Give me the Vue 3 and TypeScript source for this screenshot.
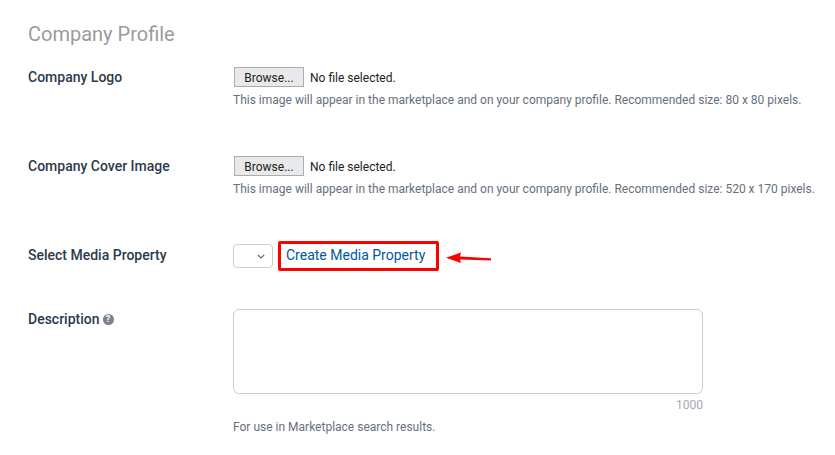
<script setup lang="ts">
interface FileRow { label: string; hint: string }
const fileRows: FileRow[] = [
  { label: 'Company Logo', hint: 'This image will appear in the marketplace and on your company profile. Recommended size: 80 x 80 pixels.' },
  { label: 'Company Cover Image', hint: 'This image will appear in the marketplace and on your company profile. Recommended size: 520 x 170 pixels.' },
]
</script>

<template>
  <div class="page">
    <h2 class="title">Company Profile</h2>

    <div v-for="row in fileRows" :key="row.label" class="row file-row">
      <div class="label">{{ row.label }}</div>
      <div class="control">
        <div class="file-line">
          <button class="browse" type="button">Browse...</button>
          <span class="file-name">No file selected.</span>
        </div>
        <div class="hint">{{ row.hint }}</div>
      </div>
    </div>

    <div class="row media-row">
      <div class="label">Select Media Property</div>
      <div class="media-control">
        <div class="select">
          <svg width="8" height="5" viewBox="0 0 8 5" class="chevron">
            <path d="M0.8 0.8 L4 4 L7.2 0.8" fill="none" stroke="#666" stroke-width="1.2" />
          </svg>
        </div>
        <a class="create" href="#">Create Media Property</a>
        <svg class="arrow" width="48" height="14" viewBox="0 0 48 14">
          <path d="M0 5.7 L15 0.5 L14 4.6 L45 6.2 L45 8.4 L14 7.6 L15 11 Z" fill="#f00" />
        </svg>
      </div>
    </div>

    <div class="row desc-row">
      <div class="label desc-label">
        Description
        <span class="help">?</span>
      </div>
      <div class="desc-control">
        <textarea class="area"></textarea>
        <div class="count">1000</div>
        <div class="hint desc-hint">For use in Marketplace search results.</div>
      </div>
    </div>
  </div>
</template>

<style>
html, body { margin: 0; background: #fff; overflow: hidden; }
</style>

<style scoped>
.page {
  width: 835px;
  height: 455px;
  box-sizing: border-box;
  padding: 22px 0 0 28px;
  font-family: Roboto, sans-serif;
  overflow: hidden;
}
.title {
  margin: 0 0 21px;
  font-size: 20px;
  line-height: 24px;
  font-weight: 400;
  color: #999b9e;
}
.row { display: flex; }
.label {
  width: 205px;
  flex: none;
  font-size: 14px;
  line-height: 20px;
  font-weight: 500;
  color: #2c3a4e;
}
.file-row { height: 89px; }
.file-line { display: flex; align-items: center; height: 20px; }
.browse {
  width: 70px;
  height: 20px;
  margin-left: 1px;
  padding: 1px 0 0;
  box-sizing: border-box;
  border: 1px solid #a9adb0;
  background: #e8e9ea;
  font-family: Roboto, sans-serif;
  font-size: 12px;
  color: #222;
}
.file-name { margin: 1px 0 0 6px; font-size: 12px; color: #222; }
.hint {
  margin-top: 5px;
  font-size: 12px;
  line-height: 16px;
  color: #66707c;
  white-space: nowrap;
}
.media-row { height: 64px; align-items: flex-start; }
.media-control {
  position: relative;
  display: flex;
  align-items: center;
  gap: 5px;
  height: 30px;
  margin-top: -4px;
}
.select {
  width: 40px;
  height: 24px;
  box-sizing: border-box;
  border: 1px solid #ccc;
  border-radius: 4px;
  display: flex;
  align-items: center;
  justify-content: flex-end;
  padding-right: 7px;
}
.create {
  box-sizing: border-box;
  width: 161px;
  height: 30px;
  border: 3px solid #f00;
  border-radius: 2px;
  display: flex;
  align-items: center;
  padding: 0 0 2px 5px;
  font-size: 14px;
  color: #00599c;
  text-decoration: none;
  white-space: nowrap;
}
.arrow { position: absolute; left: 213px; top: 11px; }
.desc-label { display: flex; align-items: center; gap: 3px; height: 20px; }
.help {
  width: 11px;
  height: 11px;
  border-radius: 50%;
  background: #7d8288;
  color: #fff;
  font-size: 9px;
  line-height: 11px;
  font-weight: 700;
  text-align: center;
}
.desc-control { width: 470px; }
.area {
  display: block;
  width: 470px;
  height: 85px;
  box-sizing: border-box;
  border: 1px solid #ccc;
  border-radius: 6px;
  outline: none;
  resize: none;
  margin: 0;
}
.count {
  margin-top: 3px;
  text-align: right;
  font-size: 12px;
  line-height: 16px;
  color: #a5a8ab;
}
.desc-hint { margin-top: 6px; }
</style>
